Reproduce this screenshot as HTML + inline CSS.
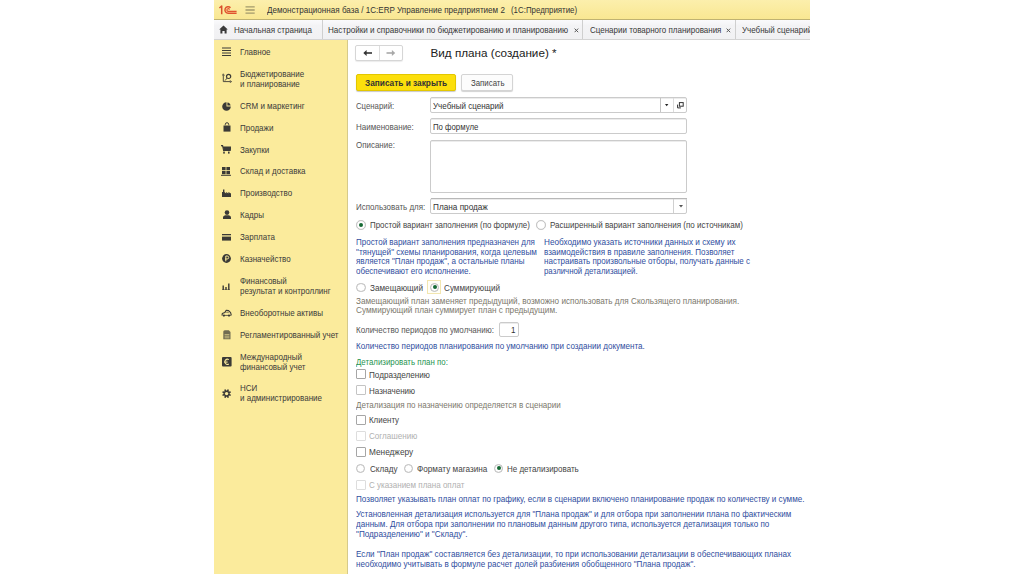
<!DOCTYPE html>
<html><head><meta charset="utf-8"><style>
html,body{margin:0;padding:0;width:1024px;height:574px;overflow:hidden;background:#fff}
body{position:relative;font-family:"Liberation Sans",sans-serif}
.t{position:absolute;white-space:nowrap;font-size:8px;line-height:10px;transform-origin:0 0}
</style></head><body>
<div style="position:absolute;left:214px;top:0px;width:596px;height:574px;background:#fff"></div>
<div style="position:absolute;left:214px;top:0px;width:596px;height:19px;background:linear-gradient(#fcefac,#f9e792)"></div>
<div style="position:absolute;left:214px;top:18.6px;width:596px;height:1.2px;background:#bfb272"></div>
<div style="position:absolute;left:214px;top:19.8px;width:596px;height:19.2px;background:linear-gradient(#fafafc,#f3f3f5 30%,#f1f1f3)"></div>
<div style="position:absolute;left:214px;top:39px;width:596px;height:1px;background:#d4d4d4"></div>
<div style="position:absolute;left:214px;top:40px;width:134px;height:534px;background:#FBEB9C"></div>
<div style="position:absolute;left:347px;top:40px;width:1px;height:534px;background:#d6ca8a"></div>
<svg style="position:absolute;left:216px;top:2px" width="42" height="16" viewBox="216 2 42 16">
<path d="M219.4 8.0 L221.7 6.0 L221.7 14.2" stroke="#d9502c" stroke-width="1.5" fill="none" stroke-linejoin="round"/>
<path d="M230.5 7.7 A3.25 3.25 0 1 0 228.3 13.25 L236.6 13.25" stroke="#e0532e" stroke-width="1.5" fill="none"/>
<path d="M229.5 9.6 A1.35 1.35 0 1 0 228.3 11.35 L236.6 11.35" stroke="#e0532e" stroke-width="1.1" fill="none"/>
<path d="M245.5 6.9H254.7M245.5 10H254.7M245.5 13.1H254.7" stroke="#a39a6c" stroke-width="1.3"/>
</svg>
<div class="t" style="left:266.5px;top:4.83px;color:#333;font-size:9.301px;transform:scaleX(0.8696);">Демонстрационная база / 1С:ERP Управление предприятием 2</div>
<div class="t" style="left:510.8px;top:4.90px;color:#333;font-size:9.079px;transform:scaleX(0.8696);">(1С:Предприятие)</div>
<svg style="position:absolute;left:219px;top:25px" width="9" height="9" viewBox="0 0 9 9">
<path d="M4.5 0.5 L8.8 4.6 L7.6 4.6 L7.6 8.6 L5.6 8.6 L5.6 6 L3.4 6 L3.4 8.6 L1.4 8.6 L1.4 4.6 L0.2 4.6 Z" fill="#3a3a3a"/></svg>
<div class="t" style="left:233.5px;top:24.54px;color:#383838;font-size:9.270px;transform:scaleX(0.8696);">Начальная страница</div>
<div style="position:absolute;left:322px;top:20px;width:1px;height:19px;background:#cfcfcf"></div>
<div class="t" style="left:328px;top:24.51px;color:#383838;font-size:9.343px;transform:scaleX(0.8696);">Настройки и справочники по бюджетированию и планированию</div>
<svg style="position:absolute;left:573.6px;top:27.7px" width="5" height="5" viewBox="0 0 5 5"><path d="M0.6 0.6L4.2 4.2M4.2 0.6L0.6 4.2" stroke="#585858" stroke-width="1"/></svg>
<div style="position:absolute;left:582px;top:20px;width:1px;height:19px;background:#cfcfcf"></div>
<div class="t" style="left:589.5px;top:24.56px;color:#383838;font-size:9.192px;transform:scaleX(0.8696);">Сценарии товарного планирования</div>
<svg style="position:absolute;left:725.9px;top:27.7px" width="5" height="5" viewBox="0 0 5 5"><path d="M0.6 0.6L4.2 4.2M4.2 0.6L0.6 4.2" stroke="#585858" stroke-width="1"/></svg>
<div style="position:absolute;left:735px;top:20px;width:1px;height:19px;background:#cfcfcf"></div>
<div class="t" style="left:742px;top:24.56px;color:#383838;font-size:9.200px;transform:scaleX(0.8696);">Учебный сценарий</div>
<div style="position:absolute;left:810px;top:0px;width:214px;height:574px;background:#fff"></div>
<div class="t" style="left:240px;top:46.96px;color:#3a3a3a;font-size:9.200px;transform:scaleX(0.8696);">Главное</div>
<div class="t" style="left:240px;top:68.66px;color:#3a3a3a;font-size:9.200px;transform:scaleX(0.8696);">Бюджетирование</div>
<div class="t" style="left:240px;top:78.56px;color:#3a3a3a;font-size:9.200px;transform:scaleX(0.8696);">и планирование</div>
<div class="t" style="left:240px;top:101.16px;color:#3a3a3a;font-size:9.200px;transform:scaleX(0.8696);">CRM и маркетинг</div>
<div class="t" style="left:240px;top:122.66px;color:#3a3a3a;font-size:9.200px;transform:scaleX(0.8696);">Продажи</div>
<div class="t" style="left:240px;top:144.66px;color:#3a3a3a;font-size:9.200px;transform:scaleX(0.8696);">Закупки</div>
<div class="t" style="left:240px;top:166.26px;color:#3a3a3a;font-size:9.200px;transform:scaleX(0.8696);">Склад и доставка</div>
<div class="t" style="left:240px;top:188.06px;color:#3a3a3a;font-size:9.200px;transform:scaleX(0.8696);">Производство</div>
<div class="t" style="left:240px;top:210.16px;color:#3a3a3a;font-size:9.200px;transform:scaleX(0.8696);">Кадры</div>
<div class="t" style="left:240px;top:232.06px;color:#3a3a3a;font-size:9.200px;transform:scaleX(0.8696);">Зарплата</div>
<div class="t" style="left:240px;top:253.96px;color:#3a3a3a;font-size:9.200px;transform:scaleX(0.8696);">Казначейство</div>
<div class="t" style="left:240px;top:275.86px;color:#3a3a3a;font-size:9.200px;transform:scaleX(0.8696);">Финансовый</div>
<div class="t" style="left:240px;top:285.76px;color:#3a3a3a;font-size:9.200px;transform:scaleX(0.8696);">результат и контроллинг</div>
<div class="t" style="left:240px;top:307.76px;color:#3a3a3a;font-size:9.200px;transform:scaleX(0.8696);">Внеоборотные активы</div>
<div class="t" style="left:240px;top:329.56px;color:#3a3a3a;font-size:9.200px;transform:scaleX(0.8696);">Регламентированный учет</div>
<div class="t" style="left:240px;top:351.86px;color:#3a3a3a;font-size:9.200px;transform:scaleX(0.8696);">Международный</div>
<div class="t" style="left:240px;top:361.66px;color:#3a3a3a;font-size:9.200px;transform:scaleX(0.8696);">финансовый учет</div>
<div class="t" style="left:240px;top:383.16px;color:#3a3a3a;font-size:9.200px;transform:scaleX(0.8696);">НСИ</div>
<div class="t" style="left:240px;top:393.16px;color:#3a3a3a;font-size:9.200px;transform:scaleX(0.8696);">и администрирование</div>
<svg style="position:absolute;left:222px;top:46.5px" width="9" height="9.5" viewBox="0 0 9 9.5"><path d="M0 1H9M0 3.5H9M0 6H9M0 8.5H9" stroke="#3b3a36" stroke-width="1.1"/></svg>
<svg style="position:absolute;left:221.5px;top:73px" width="10" height="10" viewBox="0 0 10 10"><path d="M1.3 2V8.6H8.5" stroke="#3b3a36" stroke-width="0.9" fill="none"/><path d="M0.2 2.6L1.3 0.8L2.4 2.6M7.8 7.5L9.6 8.6L7.8 9.7" stroke="#3b3a36" stroke-width="0.8" fill="none"/><circle cx="6.6" cy="3.4" r="2.1" stroke="#3b3a36" stroke-width="1.2" fill="none"/><path d="M5.2 5L3 7.6" stroke="#3b3a36" stroke-width="0.9"/></svg>
<svg style="position:absolute;left:221.8px;top:101.5px" width="9" height="9" viewBox="0 0 9 9"><path d="M4.5 4.5V0.2A4.3 4.3 0 1 0 8.8 4.5Z" fill="#3b3a36"/><path d="M5.4 3.6V0.4A3.6 3.6 0 0 1 8.6 3.6Z" fill="#3b3a36"/></svg>
<svg style="position:absolute;left:222.5px;top:122px" width="8" height="10" viewBox="0 0 8 10"><path d="M2.3 3.2V2.4A1.7 1.7 0 0 1 5.7 2.4V3.2" stroke="#3b3a36" stroke-width="1" fill="none"/><path d="M0.5 3.5H7.5V9.6H0.5Z" fill="#3b3a36"/></svg>
<svg style="position:absolute;left:221.4px;top:145px" width="10" height="9" viewBox="0 0 10 9"><path d="M0 0.6H1.6L2.6 5.5H9.2L9.8 2H2" stroke="#3b3a36" stroke-width="1.1" fill="#3b3a36"/><rect x="2.2" y="6.6" width="1.6" height="2" fill="#3b3a36"/><rect x="7" y="6.6" width="1.6" height="2" fill="#3b3a36"/></svg>
<svg style="position:absolute;left:221.4px;top:166.5px" width="10" height="9" viewBox="0 0 10 9"><rect x="1" y="0" width="3.6" height="3.2" fill="#3b3a36"/><rect x="5.4" y="0" width="3.6" height="3.2" fill="#3b3a36"/><rect x="1" y="4" width="3.6" height="3.2" fill="#3b3a36"/><rect x="5.4" y="4" width="3.6" height="3.2" fill="#3b3a36"/><rect x="0" y="7.8" width="10" height="1" fill="#3b3a36"/></svg>
<svg style="position:absolute;left:222px;top:188.5px" width="9" height="8.5" viewBox="0 0 9 8.5"><path d="M0 8.5V3H1V0.5H2.4V3L4.2 4.6V3L6.4 4.6V3L9 4.6V8.5Z" fill="#3b3a36"/></svg>
<svg style="position:absolute;left:222.7px;top:210px" width="8" height="9" viewBox="0 0 8 9"><circle cx="4" cy="2.6" r="2.3" fill="#3b3a36"/><path d="M0 9V7.3C0 5.8 1.5 5.2 4 5.2C6.5 5.2 8 5.8 8 7.3V9Z" fill="#3b3a36"/></svg>
<svg style="position:absolute;left:222px;top:233.5px" width="9" height="7" viewBox="0 0 9 7"><rect x="0" y="0" width="9" height="6.6" fill="#3b3a36"/><rect x="0" y="1.3" width="9" height="1.3" fill="#FBEB9C"/></svg>
<svg style="position:absolute;left:222px;top:253.8px" width="9" height="9" viewBox="0 0 9 9"><circle cx="4.5" cy="4.5" r="4.4" fill="#3b3a36"/><path d="M3.8 7.3V2H5.2A1.5 1.5 0 0 1 5.2 5H3" stroke="#FBEB9C" stroke-width="1" fill="none"/></svg>
<svg style="position:absolute;left:222.4px;top:283px" width="8" height="7" viewBox="0 0 8 7"><path d="M0 7H8" stroke="#3b3a36" stroke-width="0.9"/><rect x="0.5" y="2.5" width="1.4" height="4.5" fill="#3b3a36"/><rect x="3.3" y="4" width="1.4" height="3" fill="#3b3a36"/><rect x="6.1" y="0.5" width="1.4" height="6.5" fill="#3b3a36"/></svg>
<svg style="position:absolute;left:220.8px;top:308.5px" width="11" height="8" viewBox="0 0 11 8"><path d="M1 6.6L1.3 4.6L3.8 3.6L5.2 1.2L7.6 1.6L9.6 3.6L10.2 5.8L9.4 6.6" stroke="#3b3a36" stroke-width="1.1" fill="none" stroke-linejoin="round"/><path d="M4.6 3.8L5.8 2.4L7.4 2.8L8.4 4.2Z" fill="#3b3a36" opacity="0.5"/><circle cx="2.9" cy="6.6" r="1.15" fill="#3b3a36"/><circle cx="8.0" cy="6.6" r="1.15" fill="#3b3a36"/><path d="M3.5 6.4H7.4" stroke="#3b3a36" stroke-width="0.8"/></svg>
<svg style="position:absolute;left:222.7px;top:330px" width="8" height="10" viewBox="0 0 8 10"><path d="M0.3 1.8Q0.3 0.3 1.8 0.3H5.8L7.5 2V9.2H0.3Z" fill="#3b3a36" opacity="0.72"/><path d="M1.6 4.6H6.4M1.6 6.2H6.4M1.6 7.8H6.4" stroke="#FBEB9C" stroke-width="0.6"/></svg>
<svg style="position:absolute;left:221.8px;top:356.7px" width="10" height="10" viewBox="0 0 10 10"><rect x="0" y="0" width="9.6" height="9.6" rx="1" fill="#3b3a36"/><path d="M6.8 2.6A2.6 2.6 0 1 0 6.8 7" stroke="#FBEB9C" stroke-width="1.1" fill="none"/><path d="M2.6 4.2H5.6M2.6 5.6H5.6" stroke="#FBEB9C" stroke-width="0.7"/></svg>
<svg style="position:absolute;left:221.8px;top:388.8px" width="9.2" height="9.2" viewBox="0 0 9.2 9.2"><path d="M7.69 4.89 L8.98 5.64 L8.43 6.96 L6.99 6.58 L6.58 6.99 L6.96 8.43 L5.64 8.98 L4.89 7.69 L4.31 7.69 L3.56 8.98 L2.24 8.43 L2.62 6.99 L2.21 6.58 L0.77 6.96 L0.22 5.64 L1.51 4.89 L1.51 4.31 L0.22 3.56 L0.77 2.24 L2.21 2.62 L2.62 2.21 L2.24 0.77 L3.56 0.22 L4.31 1.51 L4.89 1.51 L5.64 0.22 L6.96 0.77 L6.58 2.21 L6.99 2.62 L8.43 2.24 L8.98 3.56 L7.69 4.31Z" fill="#3b3a36"/><circle cx="4.6" cy="4.6" r="1.7" fill="#FBEB9C"/></svg>
<div style="position:absolute;left:355.2px;top:45.2px;width:45.5px;height:14px;border:1px solid #d6d6d6;border-radius:2px;background:#fff;box-shadow:0 1px 1px rgba(0,0,0,0.08)"></div>
<div style="position:absolute;left:378.6px;top:46.3px;width:1px;height:14px;background:#dedede"></div>
<svg style="position:absolute;left:363px;top:49.8px" width="10" height="6" viewBox="0 0 10 6"><path d="M9 3H3" stroke="#333" stroke-width="1.6"/><path d="M0.3 3L3.6 0.1V5.9Z" fill="#333"/></svg>
<svg style="position:absolute;left:385.5px;top:49.8px" width="10" height="6" viewBox="0 0 10 6"><path d="M0.5 3H6" stroke="#a8a8a8" stroke-width="1.6"/><path d="M9.2 3L5.9 0.1V5.9Z" fill="#a8a8a8"/></svg>
<div class="t" style="left:430.5px;top:46px;font-size:11.7px;line-height:14px;color:#222">Вид плана (создание) *</div>
<div style="position:absolute;left:355.8px;top:73.9px;width:98px;height:15px;border:1px solid #e3c700;border-radius:2px;background:#fcdf0c;box-shadow:0 1px 1px rgba(0,0,0,0.22)"></div>
<div class="t" style="left:364.6px;top:77.84px;color:#333;font-size:9.545px;transform:scaleX(0.8696);font-weight:bold">Записать и закрыть</div>
<div style="position:absolute;left:461.3px;top:73.9px;width:50px;height:15px;border:1px solid #d4d4d4;border-radius:2px;background:#fcfcfc;box-shadow:0 1px 1px rgba(0,0,0,0.18)"></div>
<div class="t" style="left:470.8px;top:78.02px;color:#444;font-size:9.042px;transform:scaleX(0.8696);">Записать</div>
<div class="t" style="left:356px;top:100.84px;color:#555;font-size:8.967px;transform:scaleX(0.8696);">Сценарий:</div>
<div style="position:absolute;left:430px;top:97px;width:255px;height:14px;border:1px solid #cbcbcb;border-radius:2px;background:#fff;box-shadow:inset 0 1px 0 #ececec"></div>
<div style="position:absolute;left:659.5px;top:98px;width:1.2px;height:14px;background:#c4c4c4"></div>
<div style="position:absolute;left:673px;top:98px;width:1px;height:14px;background:#dcdcdc"></div>
<svg style="position:absolute;left:664.6px;top:103.8px" width="4" height="3"><path d="M0 0H3.4L1.7 2.2Z" fill="#222"/></svg>
<svg style="position:absolute;left:677px;top:102px" width="7" height="7" viewBox="0 0 7 7"><path d="M0.6 2.6V5.9H3.9" stroke="#333" stroke-width="1" fill="none"/><rect x="2.4" y="0.6" width="3.8" height="3.6" stroke="#333" stroke-width="1" fill="#fff"/></svg>
<div class="t" style="left:432.7px;top:100.75px;color:#333;font-size:9.246px;transform:scaleX(0.8696);">Учебный сценарий</div>
<div class="t" style="left:356px;top:121.66px;color:#555;font-size:9.220px;transform:scaleX(0.8696);">Наименование:</div>
<div style="position:absolute;left:430px;top:118px;width:255px;height:14px;border:1px solid #cbcbcb;border-radius:2px;background:#fff;box-shadow:inset 0 1px 0 #ececec"></div>
<div class="t" style="left:432.7px;top:121.74px;color:#333;font-size:8.976px;transform:scaleX(0.8696);">По формуле</div>
<div class="t" style="left:356px;top:140.47px;color:#555;font-size:9.169px;transform:scaleX(0.8696);">Описание:</div>
<div style="position:absolute;left:430px;top:140px;width:255px;height:51px;border:1px solid #cbcbcb;border-radius:2px;background:#fff;box-shadow:inset 0 1px 0 #ececec"></div>
<div class="t" style="left:356px;top:201.97px;color:#555;font-size:9.174px;transform:scaleX(0.8696);">Использовать для:</div>
<div style="position:absolute;left:430px;top:197.8px;width:255px;height:14px;border:1px solid #cbcbcb;border-radius:2px;background:#fff;box-shadow:inset 0 1px 0 #ececec"></div>
<div style="position:absolute;left:430.5px;top:198.3px;width:256px;height:1px;background:#b8b8b8"></div>
<div style="position:absolute;left:673px;top:199px;width:1px;height:14px;background:#d0d0d0"></div>
<svg style="position:absolute;left:678.6px;top:204.6px" width="4" height="3"><path d="M0 0H4L2 2.5Z" fill="#555"/></svg>
<div class="t" style="left:432.5px;top:201.58px;color:#333;font-size:9.444px;transform:scaleX(0.8696);">Плана продаж</div>
<div style="position:absolute;left:356.09999999999997px;top:220.1px;width:7.6px;height:7.6px;border:1px solid #bbb;border-radius:50%;background:#fff;box-shadow:inset 0 0 0 0.5px #eee"></div>
<div style="position:absolute;left:358.9px;top:222.9px;width:4px;height:4px;border-radius:50%;background:#166a34"></div>
<div class="t" style="left:370.4px;top:220.30px;color:#444;font-size:9.105px;transform:scaleX(0.8696);">Простой вариант заполнения (по формуле)</div>
<div style="position:absolute;left:536.4000000000001px;top:220.1px;width:7.6px;height:7.6px;border:1px solid #bbb;border-radius:50%;background:#fff;box-shadow:inset 0 0 0 0.5px #eee"></div>
<div class="t" style="left:550px;top:220.24px;color:#444;font-size:9.268px;transform:scaleX(0.8696);">Расширенный вариант заполнения (по источникам)</div>
<div class="t" style="left:356px;top:237.06px;color:#2f4d9e;font-size:9.199px;transform:scaleX(0.8696);">Простой вариант заполнения предназначен для</div>
<div class="t" style="left:356px;top:246.72px;color:#2f4d9e;font-size:9.335px;transform:scaleX(0.8696);">"тянущей" схемы планирования, когда целевым</div>
<div class="t" style="left:356px;top:256.43px;color:#2f4d9e;font-size:9.287px;transform:scaleX(0.8696);">является "План продаж", а остальные планы</div>
<div class="t" style="left:356px;top:266.16px;color:#2f4d9e;font-size:9.208px;transform:scaleX(0.8696);">обеспечивают его исполнение.</div>
<div class="t" style="left:544px;top:236.98px;color:#2f4d9e;font-size:9.429px;transform:scaleX(0.8696);">Необходимо указать источники данных и схему их</div>
<div class="t" style="left:544px;top:246.75px;color:#2f4d9e;font-size:9.249px;transform:scaleX(0.8696);">взаимодействия в правиле заполнения. Позволяет</div>
<div class="t" style="left:544px;top:256.45px;color:#2f4d9e;font-size:9.222px;transform:scaleX(0.8696);">настраивать произвольные отборы, получать данные с</div>
<div class="t" style="left:544px;top:266.22px;color:#2f4d9e;font-size:9.030px;transform:scaleX(0.8696);">различной детализацией.</div>
<div style="position:absolute;left:356.2px;top:282.5px;width:7.6px;height:7.6px;border:1px solid #bbb;border-radius:50%;background:#fff;box-shadow:inset 0 0 0 0.5px #eee"></div>
<div class="t" style="left:370px;top:282.89px;color:#444;font-size:9.416px;transform:scaleX(0.8696);">Замещающий</div>
<div style="position:absolute;left:427.2px;top:280px;width:14.2px;height:14.2px;border:1px solid #f2e6b0;box-sizing:border-box;background:#fffef6"></div>
<div style="position:absolute;left:429.7px;top:282.5px;width:7.6px;height:7.6px;border:1px solid #bbb;border-radius:50%;background:#fff;box-shadow:inset 0 0 0 0.5px #eee"></div>
<div style="position:absolute;left:432.5px;top:285.3px;width:4px;height:4px;border-radius:50%;background:#166a34"></div>
<div class="t" style="left:443.8px;top:282.91px;color:#444;font-size:9.361px;transform:scaleX(0.8696);">Суммирующий</div>
<div class="t" style="left:356px;top:295.79px;color:#7c786c;font-size:9.400px;transform:scaleX(0.8696);">Замещающий план заменяет предыдущий, возможно использовать для Скользящего планирования.</div>
<div class="t" style="left:356px;top:305.48px;color:#7c786c;font-size:9.430px;transform:scaleX(0.8696);">Суммирующий план суммирует план с предыдущим.</div>
<div class="t" style="left:356px;top:324.65px;color:#555;font-size:9.223px;transform:scaleX(0.8696);">Количество периодов по умолчанию:</div>
<div style="position:absolute;left:499px;top:321.5px;width:18px;height:13px;border:1px solid #cbcbcb;border-radius:2px;background:#fff;box-shadow:inset 0 1px 0 #ececec"></div>
<div class="t" style="left:510.5px;top:324.66px;color:#333;font-size:9.200px;transform:scaleX(0.8696);">1</div>
<div class="t" style="left:356px;top:341.33px;color:#2f4d9e;font-size:9.291px;transform:scaleX(0.8696);">Количество периодов планирования по умолчанию при создании документа.</div>
<div class="t" style="left:356px;top:356.91px;color:#1f9450;font-size:9.064px;transform:scaleX(0.8696);">Детализировать план по:</div>
<div style="position:absolute;left:356px;top:369px;width:8px;height:8px;border:1px solid #a6a6a6;border-radius:1px;background:#fff"></div>
<div class="t" style="left:369.4px;top:369.50px;color:#444;font-size:9.392px;transform:scaleX(0.8696);">Подразделению</div>
<div style="position:absolute;left:356px;top:385.2px;width:8px;height:8px;border:1px solid #c4c4c4;border-radius:1px;background:#fff"></div>
<div class="t" style="left:369.4px;top:385.56px;color:#444;font-size:9.220px;transform:scaleX(0.8696);">Назначению</div>
<div class="t" style="left:356px;top:399.94px;color:#7c786c;font-size:9.260px;transform:scaleX(0.8696);">Детализация по назначению определяется в сценарии</div>
<div style="position:absolute;left:356px;top:415px;width:8px;height:8px;border:1px solid #a6a6a6;border-radius:1px;background:#fff"></div>
<div class="t" style="left:369.4px;top:414.80px;color:#444;font-size:9.103px;transform:scaleX(0.8696);">Клиенту</div>
<div style="position:absolute;left:356px;top:431px;width:8px;height:8px;border:1px solid #ddd;border-radius:1px;background:#fff"></div>
<div class="t" style="left:369.4px;top:431.32px;color:#b0b0b0;font-size:9.308px;transform:scaleX(0.8696);">Соглашению</div>
<div style="position:absolute;left:356px;top:447px;width:8px;height:8px;border:1px solid #a6a6a6;border-radius:1px;background:#fff"></div>
<div class="t" style="left:369.4px;top:447.05px;color:#444;font-size:9.517px;transform:scaleX(0.8696);">Менеджеру</div>
<div style="position:absolute;left:355.9px;top:463.5px;width:7.6px;height:7.6px;border:1px solid #bbb;border-radius:50%;background:#fff;box-shadow:inset 0 0 0 0.5px #eee"></div>
<div class="t" style="left:369.5px;top:464.02px;color:#444;font-size:9.317px;transform:scaleX(0.8696);">Складу</div>
<div style="position:absolute;left:403.7px;top:463.5px;width:7.6px;height:7.6px;border:1px solid #bbb;border-radius:50%;background:#fff;box-shadow:inset 0 0 0 0.5px #eee"></div>
<div class="t" style="left:417px;top:463.99px;color:#444;font-size:9.416px;transform:scaleX(0.8696);">Формату магазина</div>
<div style="position:absolute;left:493.8px;top:463.5px;width:7.6px;height:7.6px;border:1px solid #bbb;border-radius:50%;background:#fff;box-shadow:inset 0 0 0 0.5px #eee"></div>
<div style="position:absolute;left:496.6px;top:466.3px;width:4px;height:4px;border-radius:50%;background:#166a34"></div>
<div class="t" style="left:507px;top:464.06px;color:#444;font-size:9.217px;transform:scaleX(0.8696);">Не детализировать</div>
<div style="position:absolute;left:356px;top:479.5px;width:8px;height:8px;border:1px solid #ddd;border-radius:1px;background:#fff"></div>
<div class="t" style="left:369.4px;top:480.15px;color:#b0b0b0;font-size:9.234px;transform:scaleX(0.8696);">С указанием плана оплат</div>
<div class="t" style="left:356px;top:494.13px;color:#2f4d9e;font-size:9.300px;transform:scaleX(0.8696);">Позволяет указывать план оплат по графику, если в сценарии включено планирование продаж по количеству и сумме.</div>
<div class="t" style="left:356px;top:509.45px;color:#2f4d9e;font-size:9.249px;transform:scaleX(0.8696);">Установленная детализация используется для "Плана продаж" и для отбора при заполнении плана по фактическим</div>
<div class="t" style="left:356px;top:519.13px;color:#2f4d9e;font-size:9.287px;transform:scaleX(0.8696);">данным. Для отбора при заполнении по плановым данным другого типа, используется детализация только по</div>
<div class="t" style="left:356px;top:528.80px;color:#2f4d9e;font-size:9.385px;transform:scaleX(0.8696);">"Подразделению" и "Складу".</div>
<div class="t" style="left:356px;top:549.12px;color:#2f4d9e;font-size:9.336px;transform:scaleX(0.8696);">Если "План продаж" составляется без детализации, то при использовании детализации в обеспечивающих планах</div>
<div class="t" style="left:356px;top:559.13px;color:#2f4d9e;font-size:9.293px;transform:scaleX(0.8696);">необходимо учитывать в формуле расчет долей разбиения обобщенного "Плана продаж".</div>
</body></html>
